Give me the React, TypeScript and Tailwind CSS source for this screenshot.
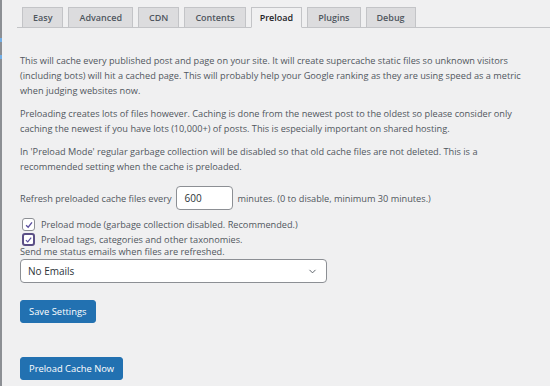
import { ChevronDown } from "lucide-react";

const tabs = ["Easy", "Advanced", "CDN", "Contents", "Preload", "Plugins", "Debug"];

const Check = ({ focused }: { focused?: boolean }) => (
  <span
    className={
      "flex h-[13px] w-[13px] items-center justify-center rounded-[3px] bg-white " +
      (focused ? "border-2 border-[#5b4f86]" : "border border-[#8c8f94]")
    }
  >
    <svg viewBox="0 0 12 12" className="h-[10px] w-[10px]">
      <path d="M2.5 6.2 L5 8.6 L9.6 2.8" fill="none" stroke="#5b4f9e" strokeWidth="1.6" />
    </svg>
  </span>
);

export default function App() {
  return (
    <div
      className="flex h-[386px] w-[550px] overflow-hidden bg-[#f0f0f1] text-[9.2px] leading-[15px] text-[#50575e]"
      style={{ fontFamily: '"Open Sans", "Noto Sans", sans-serif' }}
    >
      {/* left admin edge */}
      <div className="flex w-[2px] shrink-0 flex-col bg-[#8c8f94]">
        <div className="mt-[38px] h-[4px] w-[2px] bg-[#72aee6]" />
        <div className="mt-[13px] h-[4px] w-[2px] bg-[#72aee6]" />
      </div>

      <div className="flex-1">
        {/* tabs */}
        <div className="ml-[15px] mt-[7px] flex gap-[5px] border-b border-[#c3c4c7] pl-[5px]">
          {tabs.map((t) => (
            <div
              key={t}
              className={
                "-mb-px flex h-[21px] items-center justify-center border border-[#c3c4c7] text-[9px] font-semibold " +
                (t === "Preload"
                  ? "border-b-[#f0f0f1] bg-[#f0f0f1] px-[8px] text-[#1d2327]"
                  : "bg-[#dcdcde] px-[10px] text-[#50575e]")
              }
            >
              {t}
            </div>
          ))}
        </div>

        {/* body */}
        <div className="w-[530px] pl-[18px] pt-[25px]">
          <p>
            This will cache every published post and page on your site. It will create supercache static files so
            unknown visitors (including bots) will hit a cached page. This will probably help your Google ranking as
            they are using speed as a metric when judging websites now.
          </p>
          <p className="mt-[8px]">
            Preloading creates lots of files however. Caching is done from the newest post to the oldest so please
            consider only caching the newest if you have lots (10,000+) of posts. This is especially important on
            shared hosting.
          </p>
          <p className="mt-[8px]">
            In 'Preload Mode' regular garbage collection will be disabled so that old cache files are not deleted.
            This is a recommended setting when the cache is preloaded.
          </p>

          <div className="mt-[12px] flex items-center gap-[4px]">
            <span>Refresh preloaded cache files every</span>
            <div className="flex h-[24px] w-[57px] items-center rounded-[4px] border border-[#8c8f94] bg-white pl-[8px] text-[10px] text-[#2c3338]">
              600
            </div>
            <span className="ml-[1px]">minutes. (0 to disable, minimum 30 minutes.)</span>
          </div>

          <div className="mt-[7px] flex flex-col">
            <label className="flex items-center gap-[6px] pl-[2px]">
              <Check />
              <span>Preload mode (garbage collection disabled. Recommended.)</span>
            </label>
            <label className="flex items-center gap-[6px] pl-[2px]">
              <Check focused />
              <span>Preload tags, categories and other taxonomies.</span>
            </label>
            <span className="-mt-[3px]">Send me status emails when files are refreshed.</span>
          </div>

          <div className="mt-0 flex h-[24px] w-[307px] items-center justify-between rounded-[4px] border border-[#8c8f94] bg-white pl-[7px] pr-[8px] text-[10px] text-[#2c3338]">
            <span>No Emails</span>
            <ChevronDown className="h-[11px] w-[11px] text-[#50575e]" strokeWidth={2} />
          </div>

          <button className="mt-[17px] flex h-[23px] items-center rounded-[3px] border border-[#2271b1] bg-[#2271b1] px-[8px] text-[9.4px] text-white">
            Save Settings
          </button>

          <button className="mt-[34px] flex h-[23px] items-center rounded-[3px] border border-[#2271b1] bg-[#2271b1] px-[8px] text-[9.4px] text-white">
            Preload Cache Now
          </button>
        </div>
      </div>
    </div>
  );
}
